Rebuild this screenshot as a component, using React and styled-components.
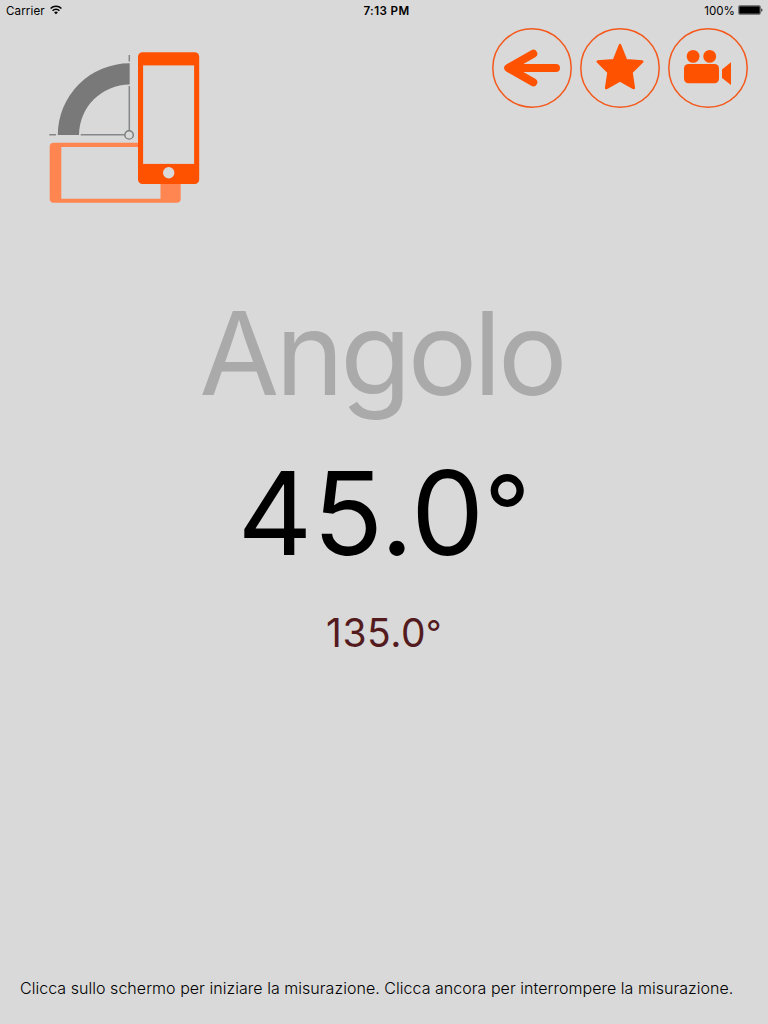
import React from "react";
import styled, { createGlobalStyle } from "styled-components";

const GlobalStyle = createGlobalStyle`
  * { box-sizing: border-box; }
  body { margin: 0; background: #d9d9d9; }
`;

const Screen = styled.div`
  display: flex;
  flex-direction: column;
  width: 768px;
  height: 1024px;
  overflow: hidden;
  background: #d9d9d9;
  color: #000;
  font-family: Inter, "Liberation Sans", sans-serif;
`;

const StatusBar = styled.div`
  display: grid;
  grid-template-columns: 1fr auto 1fr;
  align-items: center;
  height: 20px;
  padding: 0 5px 0 6px;
  font-size: 11.6px;
  line-height: 18px;
`;

const StatusGroup = styled.div`
  display: flex;
  align-items: center;
  justify-content: ${(p) => (p.$end ? "flex-end" : "flex-start")};
  gap: ${(p) => (p.$end ? "3px" : "5px")};
  letter-spacing: ${(p) => (p.$end ? "0" : "0.1px")};
`;

const StatusText = styled.span`
  padding-top: 2px;
`;

const Clock = styled.div`
  font-weight: 600;
  letter-spacing: 0.4px;
  padding: 2px 0 0 4px;
`;

const Header = styled.header`
  display: flex;
  justify-content: space-between;
  align-items: flex-start;
  height: 190px;
  padding: 8px 20px 0 44px;
`;

const Logo = styled.svg`
  display: block;
  margin-top: 18px;
`;

const Actions = styled.nav`
  display: flex;
  gap: 8px;
`;

const ActionButton = styled.button`
  display: block;
  width: 80px;
  height: 80px;
  padding: 0;
  border: 0;
  background: none;
`;

const ActionIcon = styled.svg`
  display: block;
`;

const Readout = styled.main`
  display: flex;
  flex-direction: column;
  align-items: center;
  flex: 1;
  padding-top: 73px;
`;

const Title = styled.h1`
  margin: 0;
  padding-right: 5px;
  color: #aaa;
  font-size: 116px;
  font-weight: 400;
  line-height: 140px;
  letter-spacing: -3.7px;
`;

const Angle = styled.div`
  margin-top: 20px;
  font-size: 116px;
  line-height: 140px;
  letter-spacing: 0.2px;
`;

const Supplement = styled.div`
  margin-top: 25px;
  color: #541b1e;
  font-size: 39px;
  line-height: 50px;
  letter-spacing: 0.5px;
`;

const Degree = styled.span`
  font-size: 0.87em;
  line-height: 0;
  vertical-align: 0.07em;
`;

const Hint = styled.footer`
  height: 50px;
  padding-left: 20px;
  font-size: 16px;
  font-weight: 300;
  line-height: 28px;
  letter-spacing: 0.038px;
  white-space: nowrap;
`;

const WifiIcon = () => (
  <svg width="12" height="10" viewBox="0 0 12 10" fill="none" stroke="#000" strokeWidth="1.6">
    <path d="M0.6 3.5a7.7 7.7 0 0 1 10.8 0" />
    <path d="M2.6 5.7a4.8 4.8 0 0 1 6.8 0" />
    <path d="M6 9.3 4.1 7.4a2.7 2.7 0 0 1 3.8 0z" fill="#000" stroke="none" />
  </svg>
);

const BatteryIcon = () => (
  <svg width="25" height="10" viewBox="0 0 25 10">
    <rect x="0.5" y="0.5" width="22" height="9" rx="1.5" fill="none" stroke="#555" strokeWidth="0.7" />
    <rect x="1.2" y="1.2" width="20.6" height="7.6" rx="0.6" />
    <path d="M23.4 3.2c1.3.3 1.3 3.3 0 3.6z" />
  </svg>
);

const AngleLogo = () => (
  <Logo width="160" height="160" viewBox="44 46 160 160">
    <path fill="#ff8650" fillRule="evenodd" d="M53.7 142.7H176.7a4 4 0 0 1 4 4V198.7a4 4 0 0 1-4 4H53.7a4 4 0 0 1-4-4V146.7a4 4 0 0 1 4-4zM61.3 147V198.7H160.5V147z" />
    <path fill="#ff5200" fillRule="evenodd" d="M142.5 52.2H194.7a4.5 4.5 0 0 1 4.5 4.5V179.5a4.5 4.5 0 0 1-4.5 4.5H142.5a4.5 4.5 0 0 1-4.5-4.5V56.7a4.5 4.5 0 0 1 4.5-4.5z" />
    <rect x="143.1" y="65.4" width="51" height="98.5" fill="#d9d9d9" />
    <circle cx="168.7" cy="172.7" r="5.7" fill="#d9d9d9" />
    <path fill="#797979" d="M57.8 135.1A71.7 71.7 0 0 1 129.7 63.3V84.6A50.5 50.5 0 0 0 79 135.1z" />
    <path d="M129.3 55V61.5M129.3 86V130.5M49.3 134.8H56M80.7 134.8H124.8" stroke="#858789" strokeWidth="1.5" />
    <circle cx="129.1" cy="134.9" r="4.2" fill="none" stroke="#797b7d" strokeWidth="1.4" />
  </Logo>
);

const Ring = ({ label, children }) => (
  <ActionButton aria-label={label}>
    <ActionIcon width="80" height="80" viewBox="0 0 80 80" fill="#ff5200">
      <circle cx="40" cy="40" r="39.2" fill="none" stroke="#f4581b" strokeWidth="1.5" />
      {children}
    </ActionIcon>
  </ActionButton>
);

export default function App() {
  return (
    <Screen>
      <GlobalStyle />
      <StatusBar>
        <StatusGroup>
          <StatusText>Carrier</StatusText>
          <WifiIcon />
        </StatusGroup>
        <Clock>7:13 PM</Clock>
        <StatusGroup $end>
          <StatusText>100%</StatusText>
          <BatteryIcon />
        </StatusGroup>
      </StatusBar>
      <Header>
        <AngleLogo />
        <Actions>
          <Ring label="Indietro">
            <path d="M64 40H18M41.3 25.7 16.2 40 41.3 54.3" fill="none" stroke="#ff5200" strokeWidth="8" strokeLinecap="round" strokeLinejoin="round" />
          </Ring>
          <Ring label="Preferiti">
            <path d="M40 17.2 46 32.2 62.2 33.6 51.4 44.2 53.8 60 40 52.4 26.2 60 28.6 44.2 17.8 33.6 34 32.2z" stroke="#ff5200" strokeWidth="2.6" strokeLinejoin="round" />
          </Ring>
          <Ring label="Video">
            <circle cx="25.1" cy="28.4" r="6.4" />
            <circle cx="41.7" cy="28.4" r="6.4" />
            <rect x="16" y="36" width="35" height="19.2" rx="4.5" />
            <path d="M54 41.4 63 34.3V57L54 50z" />
          </Ring>
        </Actions>
      </Header>
      <Readout>
        <Title>Angolo</Title>
        <Angle>45.0<Degree>°</Degree></Angle>
        <Supplement>135.0<Degree>°</Degree></Supplement>
      </Readout>
      <Hint>Clicca sullo schermo per iniziare la misurazione. Clicca ancora per interrompere la misurazione.</Hint>
    </Screen>
  );
}
